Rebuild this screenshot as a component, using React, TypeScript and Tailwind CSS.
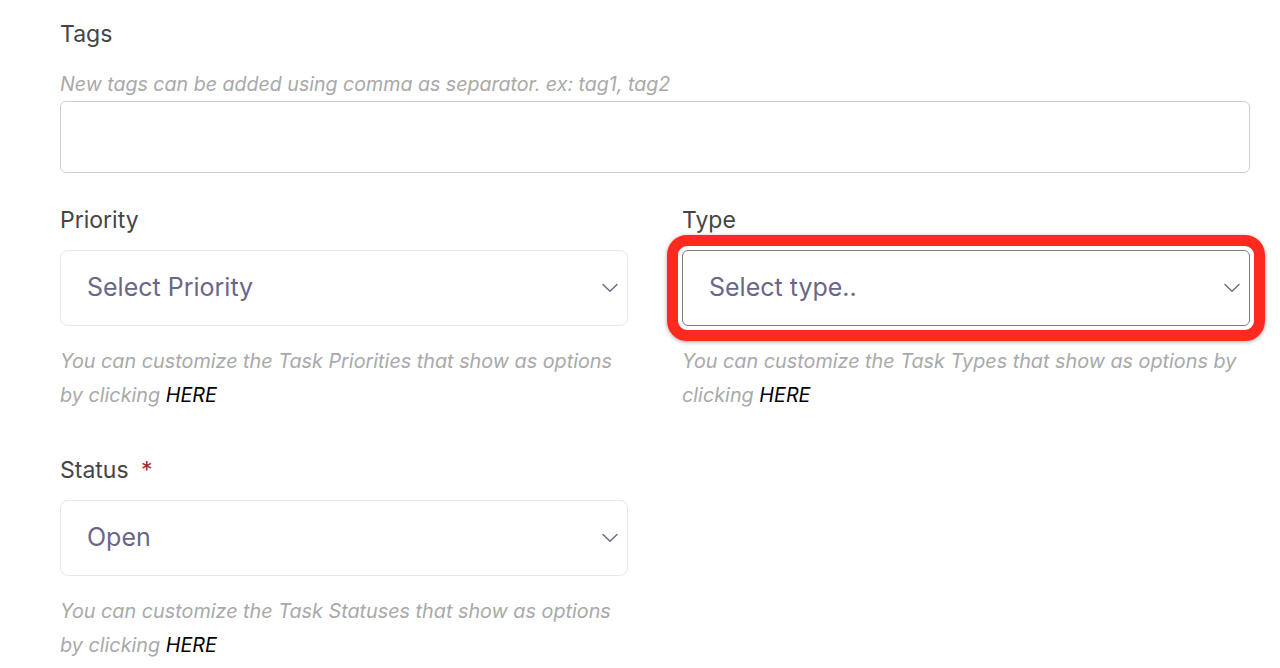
import React from "react";

function Chevron() {
  return (
    <svg width="18" height="10" viewBox="0 0 18 10" fill="none" className="shrink-0">
      <path d="M2 1.5 L9 8.3 L16 1.5" stroke="#6e6a86" strokeWidth="1.5" strokeLinecap="round" strokeLinejoin="round" />
    </svg>
  );
}

function Select({ value, highlighted }: { value: string; highlighted?: boolean }) {
  return (
    <div className="relative">
      <div
        className={
          highlighted
            ? "h-[76px] rounded-[6px] border border-[#7d7d7d] bg-white flex items-center justify-between pl-[26px] pr-[8px]"
            : "h-[76px] rounded-[8px] border border-[#e6e6ee] bg-white flex items-center justify-between pl-[26px] pr-[8px]"
        }
      >
        <span className="text-[25px] text-[#6b6689]">{value}</span>
        <Chevron />
      </div>
      {highlighted && (
        <div className="absolute -inset-[15px] rounded-[20px] border-[11px] border-[#fe2a1f] shadow-[0_1px_4px_rgba(0,0,0,0.35)] pointer-events-none" />
      )}
    </div>
  );
}

function Help({ children }: { children: React.ReactNode }) {
  return <p className="mt-[18px] text-[19.8px] leading-[34px] italic text-[#a9a9a9]">{children}</p>;
}

function Here() {
  return <span className="text-black">HERE</span>;
}

export default function App() {
  return (
    <div className="w-[1280px] h-[668px] bg-white overflow-hidden" style={{ fontFamily: "Inter, 'Noto Sans', sans-serif" }}>
      <div className="pl-[60px] pr-[30px] pt-[20px]">
        <div className="text-[23px] leading-[28px] text-[#454545]">Tags</div>
        <div className="mt-[23px] text-[19.6px] leading-[26px] italic text-[#a9a9a9]">
          New tags can be added using comma as separator. ex: tag1, tag2
        </div>
        <div className="mt-[4px] h-[72px] rounded-[6px] border border-[#cfcfcf] bg-white" />

        <div className="mt-[33px] grid grid-cols-2 gap-x-[54px]">
          <div>
            <div className="text-[23px] leading-[28px] text-[#454545] mb-[16px]">Priority</div>
            <Select value="Select Priority" />
            <Help>
              You can customize the Task Priorities that show as options by clicking <Here />
            </Help>
          </div>
          <div>
            <div className="text-[23px] leading-[28px] text-[#454545] mb-[16px]">Type</div>
            <Select value="Select type.." highlighted />
            <Help>
              You can customize the Task Types that show as options by clicking <Here />
            </Help>
          </div>
          <div className="mt-[44px]">
            <div className="text-[23px] leading-[28px] text-[#454545] mb-[16px]">
              Status <span className="text-[#a52a2a] ml-[6px]">*</span>
            </div>
            <Select value="Open" />
            <Help>
              You can customize the Task Statuses that show as options by clicking <Here />
            </Help>
          </div>
        </div>
      </div>
    </div>
  );
}
